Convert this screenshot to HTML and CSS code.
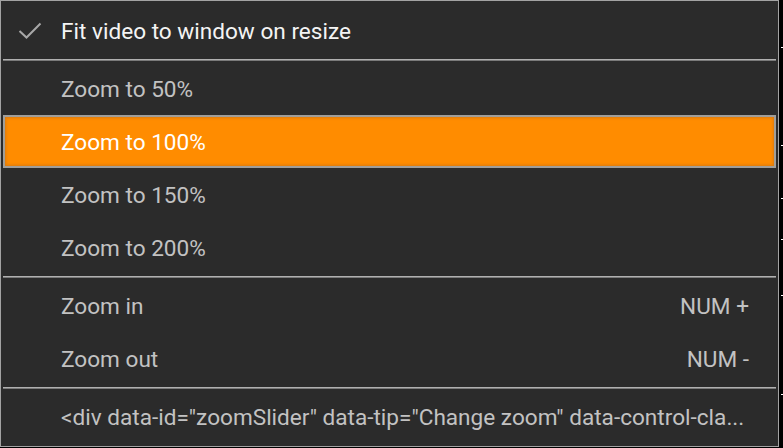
FILE: index.html
```html
<!DOCTYPE html>
<html>
<head>
<meta charset="utf-8">
<link rel="stylesheet" href="styles.css">
</head>
<body>
<div class="stage">
  <div class="menu">
    <div class="item checked">
      <span class="check"><svg width="26" height="26" viewBox="0 0 26 26"><path d="M1.5 14 L8.5 20.5 L22.5 6.5" fill="none" stroke="#a8a8a8" stroke-width="2"/></svg></span>
      <span class="label">Fit video to window on resize</span>
    </div>
    <div class="sep"></div>
    <div class="item"><span class="label">Zoom to 50%</span></div>
    <div class="item active"><span class="label">Zoom to 100%</span></div>
    <div class="item"><span class="label">Zoom to 150%</span></div>
    <div class="item"><span class="label">Zoom to 200%</span></div>
    <div class="sep"></div>
    <div class="item"><span class="label">Zoom in</span><span class="key">NUM +</span></div>
    <div class="item"><span class="label">Zoom out</span><span class="key">NUM -</span></div>
    <div class="sep"></div>
    <div class="item"><span class="label trunc">&lt;div data-id="zoomSlider" data-tip="Change zoom" data-control-cla...</span></div>
  </div>
  <div class="tick t1"></div>
  <div class="tick t2"></div>
  <div class="tick t3"></div>
  <div class="tick t4"></div>
  <div class="tick t5"></div>
  <div class="tick t6"></div>
</div>
</body>
</html>
```
FILE: styles.css
```css
html, body {
  margin: 0;
  padding: 0;
  background: #000;
}
.stage {
  position: relative;
  width: 783px;
  height: 448px;
  background: #000;
  overflow: hidden;
}
.menu {
  box-sizing: border-box;
  width: 779px;
  height: 447px;
  background: #2b2b2b;
  border: 1px solid #a3a3a3;
  padding: 3px 2px 3px 2px;
  display: flex;
  flex-direction: column;
  font-family: Roboto, "Liberation Sans", sans-serif;
  font-size: 22.6px;
  color: #c2c2c2;
}
.item {
  box-sizing: border-box;
  height: 53px;
  flex: none;
  display: flex;
  align-items: center;
  padding: 2px 27px 0 58px;
  position: relative;
  white-space: nowrap;
}
.item .label {
  flex: 1;
  min-width: 0;
}
.trunc {
  overflow: hidden;
}
.item .key {
  flex: none;
  margin-left: 20px;
}
.checked {
  color: #f4f4f4;
}
.check {
  position: absolute;
  left: 15px;
  top: 50%;
  margin-top: -13.5px;
  width: 26px;
  height: 26px;
}
.check svg {
  display: block;
}
.active {
  background: #ff8c00;
  color: #fff;
  border: 2px solid #a09e9a;
  box-shadow: inset 0 0 3px 1px #d97a10;
  padding-left: 56px;
}
.sep {
  flex: none;
  height: 5px;
  display: flex;
  align-items: center;
}
.sep::before {
  content: "";
  display: block;
  width: 100%;
  height: 2px;
  background: linear-gradient(#b0b0b0 50%, #7a7a7a 50%);
}
.tick {
  position: absolute;
  left: 781px;
  width: 2px;
  height: 1px;
  background: #fff;
}
.t1 { top: 47px; }
.t2 { top: 145px; }
.t3 { top: 198px; }
.t4 { top: 239px; }
.t5 { top: 295px; }
.t6 { top: 394px; }
```
